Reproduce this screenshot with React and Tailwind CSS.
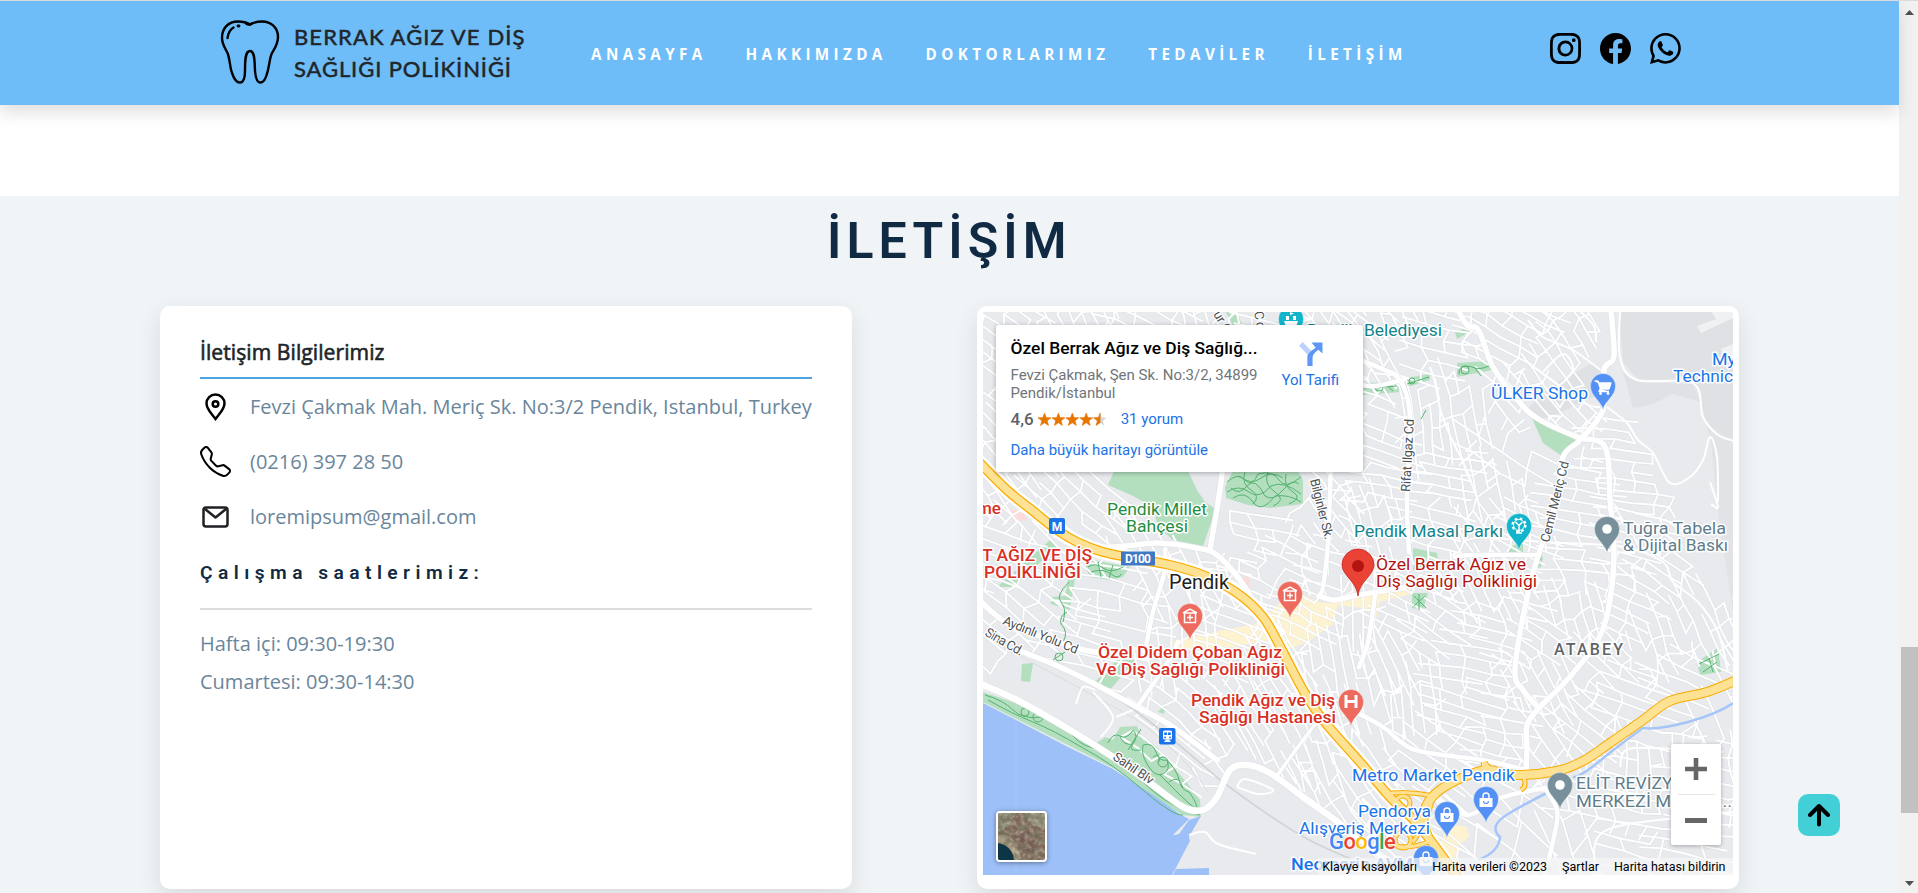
import { BsInstagram, BsFacebook, BsWhatsapp, BsTelephone } from "react-icons/bs";

const NAV = ["ANASAYFA", "HAKKIMIZDA", "DOKTORLARIMIZ", "TEDAVİLER", "İLETİŞİM"];

/* ---------- map geometry (750 x 563 canvas) ---------- */

// Street districts: centre x, centre y, rotation in degrees, block width, block height
const DISTRICTS = [
  [20, 15, 30, 22, 11], [90, 10, 60, 20, 11], [170, 12, 20, 22, 12], [225, 15, 70, 20, 11], [290, 10, 10, 22, 12],
  [345, 12, 50, 20, 12], [385, 25, 35, 20, 11], [18, 170, 50, 18, 10], [55, 200, 40, 20, 11], [25, 235, 15, 22, 12],
  [40, 310, 35, 24, 12], [95, 340, 10, 26, 14], [140, 300, 8, 24, 14], [190, 275, 60, 24, 12], [200, 330, 80, 22, 12],
  [270, 215, 5, 22, 12], [300, 245, 20, 20, 11], [335, 200, 45, 18, 11], [345, 250, 8, 20, 12], [250, 330, 15, 20, 11],
  [285, 345, 55, 18, 9], [330, 300, 20, 16, 10], [370, 300, 85, 20, 11], [360, 350, 75, 22, 10], [210, 390, 35, 20, 12],
  [260, 400, 55, 20, 12], [300, 440, 60, 24, 11], [330, 480, 55, 20, 12], [400, 130, 15, 20, 10], [405, 175, 5, 22, 10],
  [440, 120, 80, 20, 9], [465, 165, 5, 22, 10], [480, 100, 75, 20, 11], [400, 30, 60, 20, 10], [440, 35, 10, 22, 12],
  [520, 25, 25, 18, 11], [565, 60, 50, 16, 11], [540, 90, 45, 20, 11], [520, 140, 30, 28, 18], [505, 180, 75, 24, 12],
  [400, 215, 70, 24, 10], [450, 210, 10, 24, 12], [500, 215, 50, 20, 11], [530, 225, 20, 18, 11], [425, 300, 20, 22, 10],
  [410, 350, 60, 22, 10], [450, 320, 30, 22, 12], [480, 345, 5, 24, 12], [520, 310, 10, 26, 12], [510, 270, 60, 22, 11],
  [595, 200, 5, 22, 11], [650, 170, 2, 20, 10], [600, 260, 0, 24, 11], [655, 235, 10, 22, 11], [680, 260, 30, 22, 11],
  [560, 330, 30, 20, 10], [600, 300, 70, 22, 10], [645, 300, 20, 22, 11], [670, 330, 65, 20, 11], [710, 310, 60, 20, 12],
  [620, 350, 40, 22, 11], [570, 375, 60, 20, 10], [640, 380, 15, 26, 12], [390, 390, 70, 26, 11], [430, 400, 80, 24, 11],
  [480, 395, 12, 22, 10], [520, 420, 5, 20, 12], [560, 430, 50, 24, 14], [600, 410, 35, 24, 12], [440, 440, 30, 26, 14],
  [350, 420, 65, 26, 12], [340, 450, 70, 24, 12], [655, 450, 3, 12, 20], [690, 440, 3, 11, 18], [720, 455, 2, 14, 14],
  [610, 490, 8, 30, 16], [590, 540, 65, 30, 20], [660, 500, 4, 16, 13], [700, 530, 6, 22, 12], [640, 540, 12, 28, 14],
  [730, 400, 60, 30, 20], [500, 490, 30, 40, 26], [530, 540, 40, 40, 30], [380, 450, 50, 24, 12], [700, 370, 20, 26, 14],
];

const NO_STREETS = [
  // coast, rail yard and sea
  [[0, 372], [60, 395], [150, 440], [225, 500], [260, 440], [290, 470], [340, 500], [410, 563], [0, 563]],
  // airport
  [[600, 66], [630, 0], [750, 0], [750, 290], [712, 250], [700, 200], [655, 100], [615, 95]],
  // shore side block
  [[10, 372], [60, 340], [150, 400], [125, 430]],
  // parks
  [[140, 158], [125, 173], [175, 215], [229, 236], [240, 158]],
  [[250, 158], [242, 186], [287, 196], [320, 192], [320, 158]],
  [[549, 106], [590, 125], [600, 130], [579, 150], [545, 135]],
];

const insidePoly = (x, y, poly) => {
  let hit = false;
  for (let i = 0, j = poly.length - 1; i < poly.length; j = i++) {
    const [xi, yi] = poly[i];
    const [xj, yj] = poly[j];
    if (yi > y !== yj > y && x < ((xj - xi) * (y - yi)) / (yj - yi) + xi) hit = !hit;
  }
  return hit;
};

function buildStreets() {
  let seed = 7;
  const rnd = () => {
    seed = (seed * 1664525 + 1013904223) % 4294967296;
    return seed / 4294967296;
  };
  const nearest = (x, y) => {
    let best = 0;
    let bd = Infinity;
    DISTRICTS.forEach((d, i) => {
      const q = (d[0] - x) ** 2 + (d[1] - y) ** 2;
      if (q < bd) {
        bd = q;
        best = i;
      }
    });
    return best;
  };
  let path = "";
  DISTRICTS.forEach(([cx, cy, deg, w, h], di) => {
    const a = (deg * Math.PI) / 180;
    const n = 6;
    const nodes = {};
    for (let i = -n; i <= n; i++) {
      for (let j = -n; j <= n; j++) {
        const u = i * w + (rnd() - 0.5) * w * 0.3 + (j % 2) * w * 0.2;
        const v = j * h + (rnd() - 0.5) * h * 0.25 + Math.sin(i * 0.8) * 3;
        const x = cx + u * Math.cos(a) - v * Math.sin(a);
        const y = cy + u * Math.sin(a) + v * Math.cos(a);
        const ok = nearest(x, y) === di && !NO_STREETS.some((p) => insidePoly(x, y, p));
        nodes[i + "," + j] = [x, y, ok];
      }
    }
    const link = (p, q, keep) => {
      if (p && q && (p[2] || q[2]) && rnd() < keep) {
        const blocked = NO_STREETS.some((g) => insidePoly(p[0], p[1], g) || insidePoly(q[0], q[1], g));
        if (!blocked) path += `M${p[0].toFixed(1)} ${p[1].toFixed(1)}L${q[0].toFixed(1)} ${q[1].toFixed(1)}`;
      }
    };
    for (let i = -n; i <= n; i++) {
      for (let j = -n; j <= n; j++) {
        const p = nodes[i + "," + j];
        link(p, nodes[i + 1 + "," + j], 0.9);
        link(p, nodes[i + "," + (j + 1)], 0.62);
      }
    }
  });
  return path;
}

const STREETS = buildStreets();

// Smooth curve through a list of points
const curve = (pts) => {
  let d = `M${pts[0][0]} ${pts[0][1]}`;
  for (let i = 0; i < pts.length - 1; i++) {
    const p0 = pts[i - 1] || pts[i];
    const p1 = pts[i];
    const p2 = pts[i + 1];
    const p3 = pts[i + 2] || p2;
    d += `C${p1[0] + (p2[0] - p0[0]) / 6} ${p1[1] + (p2[1] - p0[1]) / 6} ${p2[0] - (p3[0] - p1[0]) / 6} ${p2[1] - (p3[1] - p1[1]) / 6} ${p2[0]} ${p2[1]}`;
  }
  return d;
};

const ROADS = [
  [5, [[475, -2], [484, 13], [496, 19], [510, 55], [537, 91], [557, 108], [594, 125], [622, 135], [627, 188], [631, 238], [627, 288], [615, 328], [584, 368], [557, 395], [544, 413], [544, 435], [543, 458]]],
  [5, [[628, -2], [631, 35], [630, 48], [621, 58], [620, 98], [597, 128], [580, 145], [574, 188], [557, 238], [544, 285], [532, 358], [540, 378], [553, 393]]],
  [4, [[372, 46], [397, 56], [417, 68], [427, 105], [424, 188], [426, 240]]],
  [4, [[340, 30], [377, 72], [420, 68]]],
  [5, [[240, 150], [237, 178], [227, 238]]],
  [5, [[74, 222], [120, 235], [174, 231], [214, 236], [234, 243], [257, 268], [278, 300], [300, 320]]],
  [4, [[348, 150], [345, 230], [340, 275], [336, 284]]],
  [5, [[336, 284], [352, 288], [375, 283], [420, 276]]],
  [4, [[392, 284], [385, 330], [376, 355]]],
  [4, [[472, 245], [490, 243], [555, 243]]],
  [4, [[182, 238], [182, 258], [170, 300], [162, 340]]],
  [6, [[-2, 372], [34, 388], [87, 418], [130, 445], [167, 471], [200, 495], [220, 498], [234, 485], [247, 458], [264, 453], [287, 461], [320, 485], [355, 510], [400, 545]]],
  [5, [[-2, 290], [24, 311], [60, 325], [97, 337], [120, 341]]],
  [5, [[40, 340], [70, 352], [104, 368], [154, 395], [190, 415], [234, 448]]],
  [4, [[154, 395], [185, 350], [195, 330]]],
  [4, [[377, 402], [400, 415], [427, 436], [460, 443], [500, 448], [543, 458]]],
  [4, [[395, 477], [440, 482], [460, 490], [485, 503], [520, 485], [562, 476]]],
  [4, [[562, 476], [574, 498], [572, 520], [562, 563]]],
  [3, [[293, 465], [330, 415], [350, 395]]],
  [3, [[462, 483], [485, 503]]],
  [3, [[380, 488], [400, 510], [380, 530]]],
];

const THIN_ROADS = [
  [[637, 0], [637, 45], [654, 68], [710, 71], [720, 105], [735, 123], [752, 129]],
  [[624, 95], [644, 111], [655, 128], [670, 141], [687, 171], [707, 165], [720, 148], [727, 125], [734, 145], [735, 190]],
  [[447, 55], [452, 70], [458, 100], [470, 130], [480, 150], [495, 188]],
  [[545, 8], [560, 25], [590, 38], [620, 60]],
  [[598, 0], [611, 14], [613, 30]],
  [[560, 60], [580, 42], [590, 58], [575, 75]],
  [[565, 112], [568, 104], [578, 105]],
  [[110, 380], [130, 405], [118, 425]],
  [[206, 523], [222, 520], [235, 532], [273, 542]],
  [[93, 392], [100, 375], [112, 378]],
  [[133, 405], [150, 398]],
  [[254, 475], [262, 467], [290, 478], [275, 482], [254, 475]],
  [[637, 455], [645, 437], [690, 437], [740, 440]],
  [[727, 170], [735, 195], [728, 192]],
  [[544, 50], [600, 90], [617, 95]],
  [[612, 563], [620, 520], [700, 505], [750, 500]],
  [[500, 225], [560, 230], [640, 235], [680, 250], [690, 270], [715, 290], [735, 320], [745, 360]],
];

const PARKS = [
  "549,106 577,121 595,126 590,135 579,144 560,131",
  "474,51 505,49 509,58 474,65",
  "472,20 484,16 487,20 474,27",
  "380,71 415,70 417,80 380,83",
  "422,66 447,62 447,68 424,75",
  "133,155 125,173 150,184 170,195 175,215 190,228 220,234 229,208 234,198 222,190 214,178 203,155",
  "250,158 242,175 243,186 265,193 287,196 320,192 320,168 313,155",
  "243,0 254,0 259,13 250,14",
  "102,255 110,248 147,255 140,265 127,268 107,265",
  "14,275 67,228 74,235 30,275",
  "67,285 82,284 85,268 92,267 87,298 68,292",
  "39,352 50,351 47,370 38,369",
  "112,370 134,348 152,348 127,378",
  "430,236 454,241 455,248 430,258",
  "429,281 445,281 440,298 429,296",
  "551,257 554,241 560,245 558,255",
  "714,350 735,336 738,360 717,363",
  "526,235 540,230 540,240 526,240",
  "0,380 54,398 114,431 122,425 130,428 137,415 154,414 160,428 174,435 187,451 204,471 217,488 218,505 200,503 167,483 134,458 87,434 0,390",
  "175,400 183,391 181,402",
];

const SQUIGGLES = [
  "M2 383Q20 388 30 398T60 405Q80 412 90 424T118 437Q140 450 160 470T205 500L217 503",
  "M5 388Q30 402 50 410T100 436Q130 452 160 478T200 503",
  "M125 431Q130 420 137 424T150 418Q156 424 150 432T158 438M137 424Q140 434 150 432M158 417L145 438",
  "M160 433Q170 430 173 440T184 448Q188 458 180 462T164 452Q158 442 160 433M170 445Q178 440 176 450",
  "M184 448Q194 458 196 468T206 480Q214 490 214 498Q204 490 196 482T176 462M186 470Q196 462 200 476",
  "M38 400a4 4 0 1 0 8 0a4 4 0 1 0-8 0M50 405a5 5 0 1 0 10 0a5 5 0 1 0-10 0M175 450a5 5 0 1 0 10 0a5 5 0 1 0-10 0",
  "M244 170Q255 160 262 168T275 162Q290 158 296 168T318 165M244 180Q256 172 266 180T288 174Q300 168 318 182M250 186Q262 178 270 190T292 184Q306 182 318 190M262 160Q258 172 268 178T270 192M285 160Q280 172 292 180T290 194M303 162Q300 174 310 180T306 192",
  "M248 176Q256 184 264 174T282 184Q290 190 300 178T316 172M256 164Q268 174 278 166T300 166",
  "M105 255Q112 250 120 256T140 255M108 260Q120 256 128 262T138 262M115 250L118 265M130 253L126 266",
  "M80 310Q84 296 78 290T86 270M84 300Q76 304 78 312Q86 320 80 330M72 345a4 4 0 1 0 8 0a4 4 0 1 0-8 0M70 348L82 340",
  "M476 62Q476 54 482 54T492 56T506 54M478 58a4 4 0 1 0 8 0a4 4 0 1 0-8 0M492 56L498 64",
  "M382 76L414 74M392 76a4 3 0 1 0 8 0a4 3 0 1 0-8 0M402 72L410 79M424 72L446 65M426 69a3 3 0 1 0 6 0a3 3 0 1 0-6 0",
  "M431 284L443 296M431 294L442 284M436 282V298M551 256L558 246M716 352L736 342M720 360L734 350M726 346L730 360M438 107L443 98",
];

const HIGHWAY = [[-6, 148], [24, 178], [50, 199], [74, 218], [96, 231], [120, 240], [154, 247], [187, 253], [220, 263], [254, 281], [280, 305], [300, 340], [320, 378], [340, 408], [377, 450], [407, 485], [437, 515], [478, 570]];
const HIGHWAY_EAST = [[756, 367], [724, 380], [687, 389], [660, 408], [627, 431], [600, 449], [574, 459], [530, 463], [504, 458], [474, 468], [450, 484], [440, 505], [445, 525]];

const MARKERS = [
  { x: 620, y: 98, fill: "#5491f5", kind: "cart" },
  { x: 308, y: 31, fill: "#12b5cb", kind: "civic" },
  { x: 536, y: 238, fill: "#12b5cb", kind: "wheel" },
  { x: 624, y: 241, fill: "#78909c", kind: "dot" },
  { x: 577, y: 497, fill: "#78909c", kind: "dot" },
  { x: 207, y: 328, fill: "#ec6a5e", kind: "clinic" },
  { x: 307, y: 306, fill: "#ec6a5e", kind: "clinic" },
  { x: 368, y: 414, fill: "#ec6a5e", kind: "letter" },
  { x: 503, y: 511, fill: "#5491f5", kind: "bag" },
  { x: 464, y: 526, fill: "#5491f5", kind: "bag" },
  { x: 443, y: 570, fill: "#5491f5", kind: "bag" },
];

function Marker({ x, y, fill, kind }) {
  return (
    <g transform={`translate(${x} ${y})`}>
      <path d="M0 0C-1.5-9-12.5-13.5-12.5-24A12.5 12.5 0 0 1 12.5-24C12.5-13.5 1.5-9 0 0Z" fill={fill} stroke="#fff" strokeOpacity=".5" strokeWidth=".7" />
      {kind === "dot" && <circle cy="-24" r="4.8" fill="#fff" />}
      {kind === "cart" && <path d="M-8-29h3l2.500 8h8.500l2-6h-12zM-3-21l-1 2.500h10" fill="#fff" stroke="#fff" strokeWidth="1.300" strokeLinejoin="round" />}
      {kind === "cart" && <g fill="#fff"><circle cx="-2.500" cy="-16.500" r="1.400" /><circle cx="5" cy="-16.500" r="1.400" /></g>}
      {kind === "clinic" && <g fill="none" stroke="#fff" strokeWidth="1.500"><path d="M-7-27L0-31L7-27M-5.500-27V-17.500H5.500V-27Z" /><path d="M0-25.500v6M-3-22.500h6" /></g>}
      {kind === "letter" && <path d="M-5-31v13M5-31v13M-5-24.500h10" stroke="#fff" strokeWidth="3" fill="none" />}
      {kind === "wheel" && <g fill="none" stroke="#fff" strokeWidth="1.500"><circle cy="-25" r="6.500" strokeWidth="2.200" strokeDasharray="2.600 2.500" /><circle cy="-25" r="5.500" strokeWidth="1" /><path d="M0-26v9M-3.500-28l3.500 3.500M3.500-28l-3.500 3.500M-3-17h6" /></g>}
      {kind === "civic" && <path d="M-7-22h14l-2 6h-10zM-5-27h3v4h-3zM2-27h3v4h-3zM-1-31l4 1.500l-4 1.500z" fill="#fff" />}
      {kind === "bag" && <g><path d="M-6.500-25h13v9h-13z" fill="#fff" /><path d="M-3-25v-2a3 3 0 0 1 6 0v2" fill="none" stroke="#fff" strokeWidth="1.400" /><path d="M-2.500-22a2.500 2.500 0 0 0 5 0" fill="none" stroke={fill} strokeWidth="1.200" /></g>}
    </g>
  );
}

// text, left x, baseline y, width, font size, colour, weight
const LABELS = [
  ["Belediyesi", 381, 24, 78, 17, "#11848d", 400],
  ["Pendik", 324, 24, 50, 17, "#11848d", 400],
  ["ÜLKER Shop", 508, 87, 97, 17, "#1a73e8", 400],
  ["My", 729, 53, 24, 17, "#1a73e8", 400],
  ["Technic", 690, 70, 60, 17, "#1a73e8", 400],
  ["Pendik Millet", 124, 203, 100, 17, "#1e8e3e", 400],
  ["Bahçesi", 143, 220, 62, 17, "#1e8e3e", 400],
  ["Pendik Masal Parkı", 371, 225, 149, 17, "#11848d", 400],
  ["Tuğra Tabela", 640, 222, 103, 17, "#607d8b", 400],
  ["& Dijital Baskı", 640, 239, 105, 17, "#607d8b", 400],
  ["Özel Berrak Ağız ve", 393, 258, 150, 17, "#b31412", 400],
  ["Diş Sağlığı Polikliniği", 393, 275, 161, 17, "#b31412", 400],
  ["me", -6, 202, 24, 17, "#d93025", 500],
  ["T AĞIZ VE DİŞ", -1, 249, 110, 17, "#d93025", 500],
  ["POLİKLİNİĞİ", 1, 266, 97, 17, "#d93025", 500],
  ["Özel Didem Çoban Ağız", 115, 346, 184, 17, "#d93025", 500],
  ["Ve Diş Sağlığı Polikliniği", 113, 363, 189, 17, "#d93025", 500],
  ["Pendik Ağız ve Diş", 208, 394, 144, 17, "#d93025", 500],
  ["Sağlığı Hastanesi", 216, 411, 137, 17, "#d93025", 500],
  ["Metro Market Pendik", 369, 469, 163, 17, "#1a73e8", 400],
  ["Pendorya", 375, 505, 73, 17, "#1a73e8", 400],
  ["Alışveriş Merkezi", 316, 522, 131, 17, "#1a73e8", 400],
  ["ELİT REVİZYON", 593, 477, 121, 17, "#607d8b", 400],
  ["MERKEZİ MOTOR...", 593, 495, 156, 17, "#607d8b", 400],
  ["Neomarin AVM", 308, 558, 122, 17, "#1a73e8", 500],
  ["Pendik", 186, 277, 60, 19.5, "#202124", 400],
];

const STREET_LABELS = [
  ["Rifat Ilgaz Cd", 427, 180, -87, 73],
  ["Cemil Meriç Cd", 566, 231, -76, 83],
  ["Bilginler Sk.", 327, 168, 76, 62],
  ["Aydınlı Yolu Cd", 19, 312, 22, 80],
  ["Sina Cd.", 1, 323, 30, 42],
  ["Sahil Blv", 129, 447, 34, 46],
  ["ur Cd", 230, 2, 60, 30],
  ["Cd", 271, 0, 80, 18],
];

function ClinicMap() {
  const hwy = curve(HIGHWAY);
  const east = curve(HIGHWAY_EAST);
  return (
    <svg viewBox="0 0 750 563" width="750" height="563" className="block font-[Roboto,sans-serif]">
      <rect width="750" height="563" fill="#e8eaed" />
      <path d="M630 0H750V129L735 123L722 108L716 76L708 70L655 67L640 50L636 0Z" fill="#dfe1e5" />
      <path d="M545 96L575 70L608 52L622 58L620 80L570 104L550 108Z" fill="#dfe1e5" />
      <path d="M640 60L658 70L710 72L718 90L690 82L670 92L650 96Z" fill="#dfe1e5" />
      <path d="M722 108L750 129V300L735 200L728 130Z" fill="#e1e3e6" />
      <path d="M714 14L733 7L727 -2H750V6L718 21Z" fill="#f0f1f3" />
      <path d="M738 37L750 32V45H741Z" fill="#f0f1f3" />
      {PARKS.map((p) => <polygon key={p} points={p} fill="#b3dfbf" />)}
      <g fill="#fef3d0">
        <polygon points="187,330 240,318 284,310 290,328 250,335 192,338" />
        <polygon points="287,300 310,278 335,290 355,292 350,312 325,330 296,340 286,322" />
        <polygon points="345,292 425,275 428,282 396,290 394,305 380,296" />
        <polygon points="466,512 484,515 486,524 474,536 476,548 455,538 462,520" />
      </g>
      <g fill="#fbdcd9">
        <polygon points="28,197 40,199 44,208 30,210" />
        <polygon points="257,266 266,264 267,274 259,275" />
        <polygon points="393,52 402,53 398,57" />
      </g>
      <path d="M0 391L87 436L130 457L170 483L198 503L206 507L190 523L205 523L207 529L189 563H0Z" fill="#9dc0f9" />
      <path d="M218 504L206 508L196 522L189 524V531L202 530L190 563L193 557L226 556V563H190L207 523Z" fill="#9dc0f9" />
      <path d={STREETS} fill="none" stroke="#cfd3d8" strokeWidth="2.800" strokeOpacity=".45" />
      <path d={STREETS} fill="none" stroke="#fff" strokeWidth="1.900" strokeLinecap="round" />
      <path d="M752 390Q735 402 705 410T660 416Q640 430 618 448T590 465" fill="none" stroke="#a6c5f8" strokeWidth="2.500" />
      <path d="M570 478Q545 490 525 502T517 525Q516 540 495 548" fill="none" stroke="#a6c5f8" strokeWidth="2.500" />
      {SQUIGGLES.map((d) => <path key={d} d={d} fill="none" stroke="#55b371" strokeWidth="1" />)}
      <path d="M60 350Q120 375 154 400T237 468Q300 515 330 530T410 563" fill="none" stroke="#d0d3d8" strokeWidth="1.600" />
      <path d="M20 335Q90 372 140 400T225 480" fill="none" stroke="#dadce0" strokeWidth="1" />
      {THIN_ROADS.map((p, i) => <path key={i} d={curve(p)} fill="none" stroke="#fff" strokeWidth="2" />)}
      {ROADS.map(([w, p], i) => <path key={i} d={curve(p)} fill="none" stroke="#d5d8dc" strokeWidth={w + 1.5} strokeOpacity=".6" />)}
      {ROADS.map(([w, p], i) => <path key={i} d={curve(p)} fill="none" stroke="#fff" strokeWidth={w + 0.5} strokeLinecap="round" />)}
      <path d={hwy} fill="none" stroke="#fff" strokeWidth="15" />
      <g fill="none" stroke="#f9ab00" strokeWidth="5">
        <circle cx="420" cy="491" r="7" /><circle cx="420" cy="528" r="8" />
        <path d="M400 482Q425 478 450 484Q445 510 430 530M405 530Q420 540 445 530M500 450Q502 458 495 462M502 450Q506 458 512 458M540 464Q545 474 538 478" />
      </g>
      <path d={east} fill="none" stroke="#f9ab00" strokeWidth="10" />
      <path d={hwy} fill="none" stroke="#f9ab00" strokeWidth="10" />
      <g fill="none" stroke="#fde293" strokeWidth="3">
        <circle cx="420" cy="491" r="7" /><circle cx="420" cy="528" r="8" />
        <path d="M400 482Q425 478 450 484Q445 510 430 530M405 530Q420 540 445 530M500 450Q502 458 495 462M502 450Q506 458 512 458M540 464Q545 474 538 478" />
      </g>
      <path d={east} fill="none" stroke="#fde293" strokeWidth="8" />
      <path d={hwy} fill="none" stroke="#fde293" strokeWidth="7.500" />
      <path d="M33 0V563" stroke="#fff" strokeOpacity=".12" />

      {STREET_LABELS.map(([t, x, y, r, w]) => (
        <text key={t} transform={`translate(${x} ${y}) rotate(${r})`} textLength={w} fontSize="13" fill="#4d5156" stroke="#fff" strokeWidth="2.500" strokeLinejoin="round" paintOrder="stroke">{t}</text>
      ))}
      {MARKERS.map((m) => <Marker key={m.x} {...m} />)}
      {LABELS.map(([t, x, y, w, s, c, wt]) => (
        <text key={t + y} x={x} y={y} textLength={w} lengthAdjust="spacingAndGlyphs" fontSize={s} fontWeight={wt} fill={c} stroke="#fff" strokeWidth="3" strokeLinejoin="round" paintOrder="stroke">{t}</text>
      ))}
      <text x="571" y="343" textLength="69" fontSize="16" fontWeight="500" fill="#5f6368" stroke="#fff" strokeWidth="3" paintOrder="stroke">ATABEY</text>

      <rect x="138" y="239.500" width="34" height="14" fill="#3f78c4" />
      <text x="155" y="251" textAnchor="middle" textLength="26" fontSize="12" fontWeight="700" fill="#fff">D100</text>
      <rect x="66" y="206" width="16" height="16" rx="2" fill="#1a73e8" />
      <text x="74" y="218.500" textAnchor="middle" fontSize="12" fontWeight="700" fill="#fff">M</text>
      <rect x="176" y="416" width="16.500" height="16.500" rx="2" fill="#1a73e8" />
      <g fill="#fff"><rect x="180" y="418.500" width="9" height="9" rx="1.500" /><path d="M181 430l2-2.500h3l2 2.500z" /></g>
      <g fill="#1a73e8"><rect x="181.200" y="420.500" width="2.800" height="2.500" /><rect x="185" y="420.500" width="2.800" height="2.500" /><circle cx="182" cy="425.500" r=".9" /><circle cx="187" cy="425.500" r=".9" /></g>

      <path d="M375 284C374 270 359 263 359 253A16 16 0 0 1 391 253C391 263 376 270 375 284Z" fill="#ea4335" stroke="#c5221f" strokeWidth=".8" />
      <circle cx="375" cy="254" r="6" fill="#b31412" />
    </svg>
  );
}

function ToothIcon() {
  return (
    <svg viewBox="0 0 60 66" className="h-[66px] w-[60px] shrink-0" fill="none" stroke="#000" strokeWidth="2.400" strokeLinecap="round" strokeLinejoin="round">
      <path d="M30 5.500C26 3 22 2.500 18 2.500C8 2.500 2 9.500 2 19C2 25 5 29 7.500 34C10 40 9.500 47 12 54C14 60 17 64 20.500 63.500C24 63 25 58 25 52C25 42 25 32 30 32C35 32 34.500 42 35 52C35.500 58 36.500 63 40 63.500C43.500 64 46 59 47.500 53C49.500 46 49.500 39 52 34C55 29 58 25 58 18C58 9 51.500 2.500 42 2.500C38 2.500 34 3 30 5.500Z" />
      <path d="M26 4.500Q29 6.500 32 4.500M7.500 19Q8.500 11.500 13.500 8.500" />
      <path d="M18 7h1" strokeWidth="2.800" />
    </svg>
  );
}

function Stars() {
  const star = "M6.500 0L8.200 4.600L13 4.800L9.200 7.800L10.500 12.500L6.500 9.800L2.500 12.500L3.800 7.800L0 4.800L4.800 4.600Z";
  return (
    <svg viewBox="0 0 69 13" className="h-[13px] w-[69px]">
      {[0, 1, 2, 3].map((i) => <path key={i} d={star} transform={`translate(${i * 13.9} 0)`} fill="#e77600" stroke="#e77600" strokeWidth=".6" />)}
      <path d={star} transform="translate(55.600 0)" fill="#d5d5d5" />
      <path d="M6.500 0V9.800L2.500 12.500L3.800 7.800L0 4.800L4.800 4.600Z" transform="translate(55.600 0)" fill="#e77600" stroke="#e77600" strokeWidth=".6" />
    </svg>
  );
}

function Header() {
  return (
    <header className="relative flex h-[104px] shrink-0 items-start bg-[#6ebdf8] pl-[220px] shadow-[0_8px_16px_rgba(0,0,0,0.12)]">
      <div className="flex w-[371px] shrink-0 items-start pt-[18px]">
        <ToothIcon />
        <div className="mt-[2px] ml-[14px] flex flex-col whitespace-nowrap font-[Lato,sans-serif] text-[22px] leading-[32px] text-[#212529] [-webkit-text-stroke:0.5px_#212529]">
          <span className="tracking-[1.1px]">BERRAK AĞIZ VE DİŞ</span>
          <span className="tracking-[0.9px]">SAĞLIĞI POLİKİNİĞİ</span>
        </div>
      </div>
      <nav className="flex gap-[38.9px] pt-[41px] font-['Open_Sans',sans-serif] text-[15.2px] leading-6 font-bold tracking-[4.4px] text-white">
        {NAV.map((n) => <a key={n}>{n}</a>)}
      </nav>
      <div className="ml-auto flex gap-[19px] pt-8 pr-[218px] text-[31px] text-black">
        <BsInstagram />
        <BsFacebook />
        <BsWhatsapp />
      </div>
    </header>
  );
}

function ContactCard() {
  return (
    <section className="flex h-[583px] w-[692px] flex-col rounded-[10px] bg-white px-10 pt-8 font-['Open_Sans',sans-serif] text-xl text-[#6a869b] shadow-[0_8px_24px_rgba(0,0,0,0.1)]">
      <h3 className="h-[41px] border-b-2 border-[#4ba3e3] text-[21.1px] leading-[28px] tracking-[0.06px] text-[#212529] [-webkit-text-stroke:0.6px_#212529]">İletişim Bilgilerimiz</h3>
      <ul className="flex flex-col">
        <li className="flex h-[55px] items-center whitespace-nowrap">
          <svg viewBox="0 0 32 32" className="mr-[18px] size-8" fill="none" stroke="#000" strokeWidth="2.500">
            <path d="M15.500 28C11 22 6.500 18 6.500 12.500A9 9 0 0 1 24.500 12.500C24.500 18 20 22 15.500 28Z" />
            <circle cx="15.500" cy="13" r="2.800" />
          </svg>
          Fevzi Çakmak Mah. Meriç Sk. No:3/2 Pendik, Istanbul, Turkey
        </li>
        <li className="flex h-[55px] items-center">
          <BsTelephone className="mr-[19px] size-[31px] text-black" />
          (0216) 397 28 50
        </li>
        <li className="flex h-[55px] items-center">
          <svg viewBox="0 0 32 32" className="mr-[18px] size-8" fill="none" stroke="#1f2024" strokeWidth="2.500" strokeLinejoin="round">
            <rect x="3.500" y="6.500" width="24" height="19" rx="2.500" />
            <path d="M5 8L15.500 16.500L26 8" />
          </svg>
          loremipsum@gmail.com
        </li>
      </ul>
      <h4 className="h-[66px] border-b-2 border-[#dcdcdc] pt-[15px] font-[Roboto,sans-serif] text-[19.2px] leading-[28px] font-semibold tracking-[5.45px] text-[#102a43]">Çalışma saatlerimiz:</h4>
      <p className="mt-[15px] leading-[38px]">Hafta içi: 09:30-19:30</p>
      <p className="leading-[38px]">Cumartesi: 09:30-14:30</p>
    </section>
  );
}

function PlaceCard() {
  return (
    <div className="absolute top-[13px] left-[13px] h-[147px] w-[367px] rounded-[2px] bg-white pt-[13px] pr-5 pl-[14.5px] font-[Roboto,sans-serif] text-[15px] shadow-[0_1px_5px_rgba(0,0,0,0.3)]">
      <div className="flex justify-between">
        <div className="whitespace-nowrap">
          <div className="text-[17.4px] leading-[20px] font-medium text-black">Özel Berrak Ağız ve Diş Sağlığ...</div>
          <div className="mt-2 leading-[18px] text-[#70757a]">Fevzi Çakmak, Şen Sk. No:3/2, 34899<br />Pendik/İstanbul</div>
        </div>
        <div className="flex flex-col items-center pr-[4px] text-[#1a73e8]">
          <svg viewBox="0 0 24 24" className="mt-[3px] h-[25px] w-[25px]">
            <path d="M1 4.500L4.500 1L13 9.500L10 14Z" fill="#bcd2fb" />
            <path d="M9 24V15.500C9 12 12 10 17 6.500L13 1.500H23.500V12L19.500 8.500C16 11.500 14 13 14 16V24Z" fill="#5e97f6" />
          </svg>
          <span className="mt-[5px] leading-[18px]">Yol Tarifi</span>
        </div>
      </div>
      <div className="mt-[7px] flex items-center">
        <span className="text-[17px] leading-[20px] font-medium text-[#5f6368]">4,6</span>
        <span className="ml-1"><Stars /></span>
        <span className="ml-[14px] leading-[18px] text-[#1a73e8]">31 yorum</span>
      </div>
      <div className="mt-[12px] leading-[18px] text-[#1a73e8]">Daha büyük haritayı görüntüle</div>
    </div>
  );
}

function SatelliteThumb() {
  return (
    <svg viewBox="0 0 47 47" className="size-full">
      <filter id="terrain" x="0" y="0" width="100%" height="100%">
        <feTurbulence type="fractalNoise" baseFrequency="0.22" numOctaves="4" seed="5" />
        <feColorMatrix values="0 0 0 0 1  0 0 0 0 .95  0 0 0 0 .85  1.6 0 0 0 -.55" />
      </filter>
      <filter id="scrub" x="0" y="0" width="100%" height="100%">
        <feTurbulence type="fractalNoise" baseFrequency="0.16" numOctaves="4" seed="11" />
        <feColorMatrix values="0 0 0 0 .15  0 0 0 0 .17  0 0 0 0 .1  0 3 0 0 -1.25" />
      </filter>
      <rect width="47" height="47" fill="#7d6757" />
      <path d="M0 0H18L12 12L0 20Z" fill="#7f7a66" />
      <path d="M28 0H47V16L34 12Z" fill="#8b8672" />
      <path d="M16 20Q28 14 40 24L36 40L22 36Z" fill="#745b52" />
      <path d="M0 22Q10 20 18 30L24 47H14L0 34Z" fill="#998a72" />
      <rect width="47" height="47" filter="url(#terrain)" opacity=".5" />
      <rect width="47" height="47" filter="url(#scrub)" opacity=".6" />
      <path d="M0 30Q8 31 13 38Q16 42 16 47H0Z" fill="#0d3546" />
    </svg>
  );
}

function MapCard() {
  return (
    <section className="h-[583px] w-[762px] rounded-[10px] bg-white p-[6px] shadow-[0_8px_24px_rgba(0,0,0,0.1)]">
      <div className="relative h-[563px] w-[750px] overflow-hidden">
        <ClinicMap />
        <PlaceCard />
        <div className="absolute bottom-[13px] left-[13px] size-[51px] overflow-hidden rounded-[4px] border-2 border-white shadow-[0_1px_5px_rgba(0,0,0,0.4)]">
          <SatelliteThumb />
        </div>
        <div className="absolute bottom-[20px] left-[346px] flex text-[22px] leading-[26px] font-medium tracking-[-0.6px] font-[Roboto,sans-serif] [text-shadow:0_0_2px_#fff,0_0_2px_#fff,0_0_2px_#fff]">
          <span className="text-[#4285f4]">G</span><span className="text-[#ea4335]">o</span><span className="text-[#fbbc04]">o</span><span className="text-[#4285f4]">g</span><span className="text-[#34a853]">l</span><span className="text-[#ea4335]">e</span>
        </div>
        <div className="absolute right-[12px] bottom-[30px] flex h-[101px] w-[50px] flex-col items-center rounded-[2px] bg-white shadow-[0_1px_4px_rgba(0,0,0,0.3)]">
          <div className="flex h-[50px] items-center justify-center">
            <svg viewBox="0 0 22 22" className="size-[22px]"><path d="M8.700 0h4.600v8.700H22v4.600h-8.700V22H8.700v-8.700H0V8.700h8.700z" fill="#666" /></svg>
          </div>
          <div className="h-px w-[37px] bg-[#e6e6e6]" />
          <div className="flex h-[50px] items-center justify-center"><div className="h-[5px] w-[22px] bg-[#666]" /></div>
        </div>
        <div className="absolute right-0 bottom-0 flex h-[17px] items-center gap-[15px] bg-[#f5f5f5]/75 pr-[7.5px] pl-1 font-[Roboto,sans-serif] text-[12.5px] leading-[17px] whitespace-nowrap text-black">
          <span>Klavye kısayolları</span>
          <span>Harita verileri ©2023</span>
          <span>Şartlar</span>
          <span>Harita hatası bildirin</span>
        </div>
      </div>
    </section>
  );
}

function Scrollbar() {
  return (
    <div className="flex w-[19px] flex-col items-center bg-[#f1f1f1]">
      <svg viewBox="0 0 9 5" className="mt-[9px] ml-[2px] h-[5px] w-[9px]"><path d="M0 5L4.500 0L9 5Z" fill="#505050" /></svg>
      <div className="mt-[632px] ml-[2px] h-[166px] w-[17px] shrink-0 bg-[#c1c1c1]" />
      <svg viewBox="0 0 9 5" className="mt-auto mb-[7px] ml-[2px] h-[5px] w-[9px]"><path d="M0 0L4.500 5L9 0Z" fill="#505050" /></svg>
    </div>
  );
}

export default function App() {
  return (
    <div className="flex h-[893px] w-[1918px] flex-col overflow-hidden border-t border-[#dadada]">
      <div className="flex min-h-0 flex-1">
        <div className="relative flex w-[1899px] flex-col bg-white">
          <Header />
          <main className="mt-[91px] flex flex-1 flex-col bg-[#f0f4f7]">
            <h2 className="pt-[15px] pl-[827px] font-[Roboto,sans-serif] text-[50px] leading-[60px] font-semibold tracking-[5.1px] text-[#102a43]">İLETİŞİM</h2>
            <div className="mt-[35px] flex gap-[125px] pl-[160px]">
              <ContactCard />
              <MapCard />
            </div>
          </main>
          <button className="absolute right-[59px] bottom-[57px] flex size-[42px] items-center justify-center rounded-[10px] bg-[#42d0d6]">
            <svg viewBox="0 0 22 24" className="h-6 w-[22px]" fill="none" stroke="#000" strokeWidth="4" strokeLinecap="round" strokeLinejoin="round"><path d="M11 21.500V3M2 12L11 3L20 12" /></svg>
          </button>
        </div>
        <Scrollbar />
      </div>
    </div>
  );
}
